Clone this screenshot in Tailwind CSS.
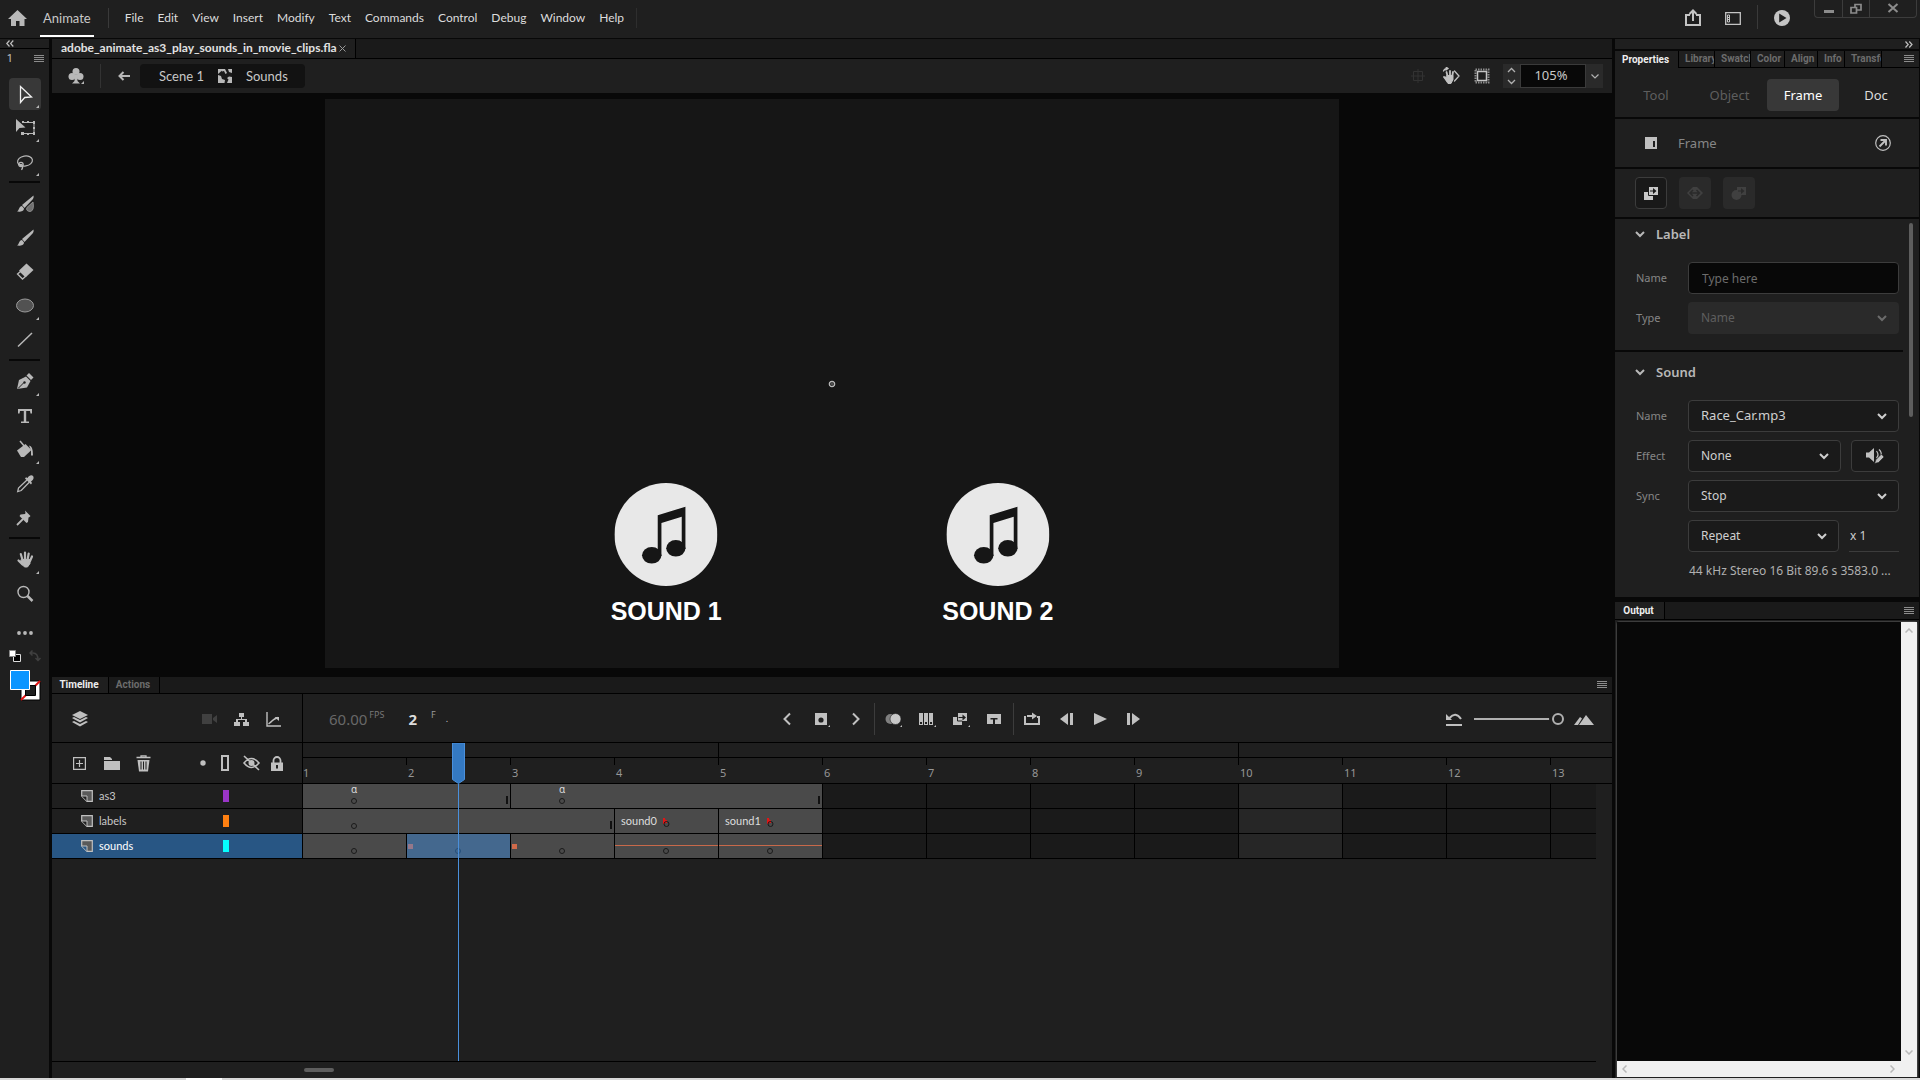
<!DOCTYPE html>
<html lang="en">
<head>
<meta charset="utf-8">
<title>Animate</title>
<script src="https://cdn.jsdelivr.net/npm/@tailwindcss/browser@4"></script>
</head>
<body class="flex h-screen flex-col overflow-hidden bg-[#080808] font-['Noto_Sans',sans-serif] text-[13px] text-[#c8c8c8]">

<!-- Menu bar -->
<header class="flex h-[38px] shrink-0 justify-between bg-[#1f1f1f]">
  <div class="flex items-start font-[Lato,sans-serif]">
    <button aria-label="Home" class="mt-[10px] ml-2"><svg class="h-[17px] w-5" viewBox="0 0 20 17" fill="#b8b8b8"><path d="M9.500 0 0 9h3v7h5v-5h3.500v5h5V9H19z"/></svg></button>
    <a href="#" class="mt-2 ml-3 border-b-2 border-white px-[3px] pb-[7px] text-[13px] leading-5 text-[#c8c8c8]">Animate</a>
    <div class="mt-2 ml-[14px] h-5 w-px bg-[#3a3a3a]"></div>
    <nav class="mt-2 ml-4 flex gap-[14px] text-xs leading-5 text-[#dcdcdc]">
      <a href="#">File</a><a href="#">Edit</a><a href="#">View</a><a href="#">Insert</a><a href="#">Modify</a><a href="#">Text</a><a href="#">Commands</a><a href="#">Control</a><a href="#">Debug</a><a href="#">Window</a><a href="#">Help</a>
    </nav>
    <div class="mt-2 ml-3 h-5 w-px bg-[#2e2e2e]"></div>
  </div>
  <div class="flex items-start">
    <button aria-label="Share" class="mt-[9px]"><svg class="h-[18px] w-4" viewBox="0 0 16 18" fill="none" stroke="#c4c4c4" stroke-width="2"><path d="M5 6H1v10h14V6h-4M8 12V2M4.500 5 8 1.500 11.500 5"/></svg></button>
    <button aria-label="Workspace" class="mt-3 ml-6"><svg class="h-[13px] w-4" viewBox="0 0 16 13" fill="none" stroke="#c4c4c4" stroke-width="1.300"><path d="M.7.7h14.600v11.600H.7z"/><path d="M2.500 3h2v7h-2z" stroke-width="1"/><path d="M2 5.500h3M2 7.500h3" stroke-width="1"/></svg></button>
    <div class="mt-[5px] ml-4 h-6 w-px bg-[#3a3a3a]"></div>
    <button aria-label="Test movie" class="mt-[10px] ml-4"><svg class="size-4" viewBox="0 0 16 16"><circle cx="8" cy="8" r="8" fill="#c4c4c4"/><path d="M5.200 3.500 12.500 8l-7.300 4.500z" fill="#1f1f1f"/></svg></button>
    <div class="mr-[3px] ml-6 flex h-[18px] divide-x divide-[#3c3c3c] rounded-b-sm border border-t-0 border-[#3c3c3c]">
      <button aria-label="Minimize" class="flex w-7 justify-center"><svg class="h-4 w-3" viewBox="0 0 12 16"><path d="M1 10h10v3H1z" fill="#8c8c8c"/></svg></button>
      <button aria-label="Restore" class="flex w-[27px] justify-center"><svg class="h-4 w-3" viewBox="0 0 12 16" fill="none" stroke="#8c8c8c" stroke-width="1.700"><path d="M1 7.500h5.500v5.500H1zM5 7V4.500h6V10H7"/></svg></button>
      <button aria-label="Close" class="flex w-[46px] justify-center"><svg class="h-4 w-3" viewBox="0 0 12 16" stroke="#8c8c8c" stroke-width="2"><path d="m1.500 4 9 8m0-8-9 8"/></svg></button>
    </div>
  </div>
</header>

<div class="mt-px flex min-h-0 flex-1 gap-[3px]">

  <!-- Tools -->
  <aside class="flex w-[49px] shrink-0 flex-col items-center bg-[#1f1f1f]">
    <div class="flex h-[10px] w-full items-center border-b border-black pl-[6px]"><svg class="h-[7px] w-2" viewBox="0 0 8 7" fill="none" stroke="#c0c0c0" stroke-width="1.200"><path d="M3.500.5.8 3.500l2.700 3M7.300.5 4.600 3.500l2.700 3"/></svg></div>
    <div class="flex h-[19px] w-full items-center justify-between pr-[5px] pl-[7px]"><span class="font-[Roboto,sans-serif] text-[10px] leading-3">1</span><button aria-label="Tools menu"><svg class="h-2 w-[10px]" viewBox="0 0 10 8" fill="#8c8c8c"><path d="M0 0h10v1H0zM0 2h10v1H0zM0 4h10v1H0zM0 6h10v1H0z"/></svg></button></div>
    <div class="mt-[10px] flex flex-col gap-[2px]">
      <button aria-label="Selection" class="rounded-sm bg-[#383838]"><svg class="size-8" viewBox="0 0 32 32"><path d="M11.500 8.500v16l4.200-5 6.800-.5z" fill="none" stroke="#f0f0f0" stroke-width="1.300"/><path d="M30 27v3h-3z" fill="#b8b8b8"/></svg></button>
      <button aria-label="Free transform"><svg class="size-8" viewBox="0 0 32 32"><path d="M14 10.500h11v11H13" fill="none" stroke="#b8b8b8"/><path d="M12 20h3v3h-3zM24 9h2v3h-2zM24 20h2v3h-2zM18 9h2v2h-2zM18 21h2v2h-2zM24 15h2v2h-2zM13 9h2v2h-2z" fill="#b8b8b8"/><path d="M7 7v13l3.500-4 6-.5z" fill="#b8b8b8"/><path d="M30 27v3h-3z" fill="#b8b8b8"/></svg></button>
      <button aria-label="Lasso"><svg class="size-8" viewBox="0 0 32 32" fill="none" stroke="#b8b8b8" stroke-width="1.200"><ellipse cx="16" cy="15" rx="7.500" ry="5" transform="rotate(-10 16 15)"/><circle cx="12" cy="18.500" r="2.200"/><path d="M9 18.500h4q1.500 3-.5 5.500"/><path d="M30 27v3h-3z" fill="#b8b8b8" stroke="none"/></svg></button>
    </div>
    <div class="mt-[3px] mb-[5px] h-[2px] w-[31px] bg-[#080808]"></div>
    <div class="flex flex-col gap-[2px]">
      <button aria-label="Fluid brush"><svg class="size-8" viewBox="0 0 32 32" fill="#b8b8b8"><path d="M24.500 7.500 13 17l2.500 3L24 11q1-2 .5-3.500zM8 23.500c2-.5 2-5.500 5-5.500l2 2.500c0 3-4 3.500-7 3z"/><path d="M24 14q1.500 9-3 9.500-4.500-.5-3-4z" fill="#707070" stroke="#8c8c8c"/></svg></button>
      <button aria-label="Classic brush"><svg class="size-8" viewBox="0 0 32 32" fill="#b8b8b8"><path d="M24.500 7.500 13 17l2.500 3L24 11q1-2 .5-3.500zM8 23.500c2-.5 2-5.500 5-5.500l2 2.500c0 3-4 3.500-7 3z"/></svg></button>
      <button aria-label="Eraser"><svg class="size-8" viewBox="0 0 32 32"><path d="m17.500 7.500 7 6.500-7.500 7-7-6.500z" fill="#b8b8b8"/><path d="m11.500 15.500 5 5-3 2.500-5-5z" fill="none" stroke="#b8b8b8" stroke-width="1.300"/></svg></button>
      <button aria-label="Oval"><svg class="size-8" viewBox="0 0 32 32"><ellipse cx="16" cy="15.500" rx="8.500" ry="6.500" fill="#525252" stroke="#9a9a9a"/><path d="M30 27v3h-3z" fill="#b8b8b8"/></svg></button>
      <button aria-label="Line"><svg class="size-8" viewBox="0 0 32 32"><path d="M9 22.500 23 9" stroke="#b8b8b8" stroke-width="1.500"/></svg></button>
    </div>
    <div class="mt-[3px] mb-[5px] h-[2px] w-[31px] bg-[#080808]"></div>
    <div class="flex flex-col gap-[2px]">
      <button aria-label="Pen"><svg class="size-8" viewBox="0 0 32 32" fill="#b8b8b8"><path d="m8 23 2-9 7-3.500 4.500 4.500L18 21.500z"/><path d="m17.500 9.500 2.500-2.500 4.500 4.500-2.500 2.500z"/><path d="m9 22.500 6-6" stroke="#1f1f1f"/><circle cx="15.500" cy="16.500" r="1.200" fill="#1f1f1f"/><path d="M30 27v3h-3z"/></svg></button>
      <button aria-label="Text"><svg class="size-8" viewBox="0 0 32 32" fill="#b8b8b8"><path d="M9 9h14v4.500h-1.500L21 11h-3.800v10.500H20V23h-8v-1.500h2.800V11H11l-.5 2.500H9z"/></svg></button>
      <button aria-label="Paint bucket"><svg class="size-8" viewBox="0 0 32 32" fill="#b8b8b8"><path d="m8 16.500 8.500-6.500 6 6-7.500 7h-3z"/><path d="m11 7 5 6" stroke="#b8b8b8" stroke-width="1.500"/><path d="M20 11.500q4 0 4 10h-2v-5z"/><path d="M30 27v3h-3z"/></svg></button>
      <button aria-label="Eyedropper"><svg class="size-8" viewBox="0 0 32 32"><path d="m18 12-8.500 8-.8 3.500 3.500-1L20.500 14" fill="none" stroke="#b8b8b8" stroke-width="1.300"/><path d="m16 10.500 6 6 1-1.500-1-1.500c3-2 3-4 2-5.500s-4-1-5.500 2l-1.500-.8z" fill="#b8b8b8"/></svg></button>
      <button aria-label="Asset warp"><svg class="size-8" viewBox="0 0 32 32" fill="#b8b8b8"><path d="M16 8.500 21.500 14l-1 1-1 .5-.5 4.500-1.500 1-7-7 1-1.500 4.500-.5.500-1z"/><path d="m8 23 6-6" stroke="#b8b8b8" stroke-width="1.800"/></svg></button>
    </div>
    <div class="mt-[3px] mb-[5px] h-[2px] w-[31px] bg-[#080808]"></div>
    <div class="flex flex-col gap-[2px]">
      <button aria-label="Hand"><svg class="size-8" viewBox="0 0 32 32" fill="none" stroke="#b8b8b8" stroke-width="2.200" stroke-linecap="round"><path d="M13.500 16 11.800 10M16 15V8.500M18.700 15l1-5.500M21 17l2-4.500M9.500 16.500l4 4"/><path d="M12.500 15.500h8.500v4l-2.500 3.500h-3l-4-4.500z" fill="#b8b8b8" stroke-width="1"/><path d="M30 27v3h-3z" fill="#b8b8b8" stroke="none"/></svg></button>
      <button aria-label="Zoom"><svg class="size-8" viewBox="0 0 32 32" fill="none" stroke="#b8b8b8"><circle cx="14.500" cy="14" r="5.500" stroke-width="1.400"/><path d="m18.500 18 5 5" stroke-width="2.500"/></svg></button>
    </div>
    <button aria-label="Edit toolbar" class="mt-[13px]"><svg class="h-5 w-8" viewBox="0 0 32 20" fill="#b8b8b8"><circle cx="10" cy="10" r="1.900"/><circle cx="16" cy="10" r="1.900"/><circle cx="22" cy="10" r="1.900"/></svg></button>
    <div class="mt-[5px] flex w-8 items-center justify-between">
      <button aria-label="Default colours"><svg class="h-4 w-3" viewBox="0 0 12 16"><path d="M4.500 6.500h7v7h-7z" fill="#000" stroke="#ddd"/><path d="M.5 2.500h6v6h-6z" fill="#fff" stroke="#888"/></svg></button>
      <button aria-label="Swap colours"><svg class="h-4 w-3" viewBox="0 0 12 16" fill="none" stroke="#404040" stroke-width="1.500"><path d="M1 5h3q5 0 5 7M3.500 2.500 1 5l2.500 2.500M6.500 10 9 12.500l2.500-2.500"/></svg></button>
    </div>
    <button aria-label="Fill and stroke colour" class="mt-[5px]"><svg class="size-8" viewBox="0 0 32 32"><path d="M12 12h19v19H12z" fill="#fff" stroke="#000"/><path d="m12 31 19-19" stroke="#e01010" stroke-width="2"/><path d="M16.500 16.500h10v10h-10z" fill="#1f1f1f" stroke="#000"/><path d="M1.500 1.500h19v19h-19z" fill="#0a95ff" stroke="#fff"/></svg></button>
  </aside>

  <!-- Document and timeline -->
  <main class="flex min-w-0 flex-1 flex-col gap-[7px]">
    <section class="flex min-h-0 flex-[631_1_0%] flex-col">
      <div class="flex h-5 shrink-0 border-b border-black bg-[#1a1a1a]">
        <div class="flex w-[304px] items-center justify-between border-r border-black bg-[#1f1f1f] px-[9px] pb-px font-[Lato,sans-serif] text-xs leading-4 font-bold whitespace-nowrap text-[#e2e2e2]">adobe_animate_as3_play_sounds_in_movie_clips.fla<button aria-label="Close document"><svg class="size-[7px]" viewBox="0 0 7 7" stroke="#9a9a9a"><path d="m.5.5 6 6m0-6-6 6"/></svg></button></div>
      </div>
      <div class="flex h-[34px] shrink-0 items-center justify-between bg-[#1f1f1f] pr-[9px] pl-4">
        <div class="flex items-center">
          <button aria-label="Edit symbols"><svg class="size-[18px]" viewBox="0 0 18 18" fill="#b8b8b8"><circle cx="8" cy="4.500" r="3.500"/><circle cx="4" cy="9.500" r="3.500"/><circle cx="12" cy="9.500" r="3.500"/><path d="M7 8h2l.5 6 2.500 2.500H4L6.500 14z"/><path d="M16 14v3h-3z"/></svg></button>
          <div class="mr-[17px] ml-3.5 h-6 w-px bg-[#333]"></div>
          <button aria-label="Back"><svg class="h-[10px] w-3" viewBox="0 0 12 10"><path d="M12 5H2M5.500 1 1.500 5l4 4" fill="none" stroke="#b8b8b8" stroke-width="2"/></svg></button>
          <div class="ml-[10px] flex h-6 items-center rounded-sm bg-[#121212] pr-[17px] pl-[19px] font-[Lato,sans-serif] leading-5">
            <a href="#">Scene 1</a>
            <svg class="mr-[14px] ml-[14px] size-[14px]" viewBox="0 0 14 14"><path d="M0 0h14v14H0z" fill="#b8b8b8"/><path d="M0 0h2.500l1.500 2.500L6 2l1.500 3L9 4 7 0h3l1 3 3 1V8l-3-.5L9 9l1.500 1.500L9 14H6.500L7 11 4 10 3 7 0 6z" fill="#1a1a1a"/><path d="M0 8h2l1 3 2.500.5V14H0zM0 0h4v1.500L0 5z" fill="#b8b8b8"/></svg>
            <a href="#">Sounds</a>
          </div>
        </div>
        <div class="flex items-center">
          <button aria-label="Centre stage"><svg class="size-4" viewBox="0 0 16 16" fill="none" stroke="#333"><path d="M3.500 3.500h9v9h-9zM8 1v14M1 8h14"/></svg></button>
          <button aria-label="Rotate stage" class="ml-4"><svg class="h-[18px] w-[18px]" viewBox="0 0 18 18" fill="none" stroke="#c0c0c0" stroke-linecap="round"><path d="M5.500 9 4.500 5M8 8V4M10.300 9l.7-4M2 10l3 3" stroke-width="1.800"/><path d="M5 8.500h6v4L9 16.500H6L3 12z" fill="#c0c0c0"/><path d="m12.500 4 4.500 5-4.500 5M1.500 4q1-2.500 4-2.500M4 0l2 1.500L4 3" stroke-width="1.300"/></svg></button>
          <button aria-label="Clip content" class="ml-[14px]"><svg class="size-4" viewBox="0 0 16 16" fill="none" stroke="#8c8c8c"><path d="M1.500 1.500h13v13h-13z" stroke-width="2" stroke-dasharray="1.500 1"/><path d="M3.500 3.500h9v9h-9z" stroke="#c4c4c4" stroke-width="1.500"/></svg></button>
          <div class="ml-[13px] flex h-6 items-stretch bg-[#2a2a2a]">
            <button aria-label="Step zoom" class="flex w-[17px] items-center justify-center"><svg class="h-[18px] w-[9px]" viewBox="0 0 9 18" fill="none" stroke="#b0b0b0" stroke-width="1.300"><path d="m1 5 3.500-3.500L8 5M1 13l3.500 3.500L8 13"/></svg></button>
            <input aria-label="Zoom" value="105%" class="w-[66px] border border-[#3a3a3a] bg-[#080808] pr-1 text-center text-[#c8c8c8]">
            <button aria-label="Zoom presets" class="flex w-[17px] items-center justify-center"><svg class="h-[5px] w-2" viewBox="0 0 8 5" fill="none" stroke="#b0b0b0" stroke-width="1.200"><path d="m.5.5 3.500 3.500L7.500.5"/></svg></button>
          </div>
        </div>
      </div>
      <div class="min-h-0 flex-1 bg-[#080808] pt-[6px] pb-[2px]">
        <div class="relative mx-auto h-full w-[65%] bg-[#161616] font-['Liberation_Sans',sans-serif]">
          <svg class="absolute top-1/2 left-1/2 size-2 -translate-1/2" viewBox="0 0 8 8" fill="none"><circle cx="4" cy="4" r="2.700" stroke="#ccc" stroke-width="1.200"/><path d="M4 1v6M1 4h6" stroke="#888" stroke-width=".6"/></svg>
          <div class="absolute top-[67.500%] left-[33.650%] flex -translate-x-1/2 flex-col items-center">
            <svg class="size-[103px]" viewBox="0 0 103 103"><circle cx="51.500" cy="51.500" r="51.500" fill="#e8e8e8"/><g fill="#161616"><path d="M43.300 32.300 71 23.700V66h-3.700V33.700L47 40v33h-3.700z"/><ellipse cx="37.300" cy="72.300" rx="9.700" ry="8.300"/><ellipse cx="61.400" cy="65.300" rx="9.600" ry="8.300"/></g></svg>
            <div class="mt-[11px] text-[25px] leading-7 font-bold whitespace-nowrap text-white">SOUND 1</div>
          </div>
          <div class="absolute top-[67.500%] left-[66.350%] flex -translate-x-1/2 flex-col items-center">
            <svg class="size-[103px]" viewBox="0 0 103 103"><circle cx="51.500" cy="51.500" r="51.500" fill="#e8e8e8"/><g fill="#161616"><path d="M43.300 32.300 71 23.700V66h-3.700V33.700L47 40v33h-3.700z"/><ellipse cx="37.300" cy="72.300" rx="9.700" ry="8.300"/><ellipse cx="61.400" cy="65.300" rx="9.600" ry="8.300"/></g></svg>
            <div class="mt-[11px] text-[25px] leading-7 font-bold whitespace-nowrap text-white">SOUND 2</div>
          </div>
        </div>
      </div>
    </section>

    <section class="flex min-h-0 flex-[401_1_0%] flex-col bg-[#1f1f1f]">
      <div class="flex h-[17px] shrink-0 items-stretch border-b border-black bg-[#1a1a1a] font-[Roboto,sans-serif] text-[10px] leading-4 font-bold">
        <button class="w-[57px] border-r border-black bg-[#1f1f1f] pr-[2px] text-[#eee]">Timeline</button>
        <button class="w-[51px] border-r border-black pr-[2px] text-[#6c6c6c]">Actions</button>
        <button aria-label="Timeline menu" class="mr-[5px] ml-auto"><svg class="h-2 w-[10px]" viewBox="0 0 10 8" fill="#8c8c8c"><path d="M0 0h10v1H0zM0 2h10v1H0zM0 4h10v1H0zM0 6h10v1H0z"/></svg></button>
      </div>

      <div class="flex h-[49px] shrink-0 border-b border-black">
        <div class="flex w-[251px] shrink-0 items-center border-r border-black pt-[2px] pl-5">
          <button aria-label="Layer depth"><svg class="size-4" viewBox="0 0 16 16" fill="#c0c0c0"><path d="m8 0 8 4-8 4-8-4zM0 7l2-1 6 3 6-3 2 1-8 4.500zM0 11l2-1 6 3 6-3 2 1-8 4.500z"/></svg></button>
          <button aria-label="Camera" class="ml-[114px]"><svg class="h-[10px] w-4" viewBox="0 0 16 10" fill="#404040"><path d="M0 0h10v10H0zM11 4l4-3v8l-4-3z"/></svg></button>
          <button aria-label="Parenting view" class="ml-4"><svg class="size-[15px]" viewBox="0 0 15 15" fill="#c0c0c0"><path d="M5 1h5v4H8v2h5v3h2v4H9v-4h2V8H4v2h2v4H0v-4h2V7h5V5H5z"/></svg></button>
          <button aria-label="Graph" class="ml-[17px]"><svg class="size-[15px]" viewBox="0 0 15 15" fill="none" stroke="#c0c0c0" stroke-width="1.400"><path d="M1 0v14h14M2.500 12Q5 10 6.500 8.500T12 5.500"/><path d="M8.500 5h4.500v4z" fill="#c0c0c0" stroke="none"/></svg></button>
        </div>
        <div class="flex min-w-0 flex-1 items-center pt-[2px] pr-[18px] pl-[26px]">
          <div class="flex flex-1 items-center">
            <span class="text-[15px] leading-5 text-[#686868]">60.00</span><span class="mb-2 ml-[2px] text-[9px] leading-3 text-[#777]">FPS</span>
            <span class="ml-6 text-[15px] leading-5 font-bold text-[#dcdcdc]">2</span><span class="mb-2 ml-[14px] text-[9px] leading-3 text-[#999]">F</span><span class="ml-[10px] text-[9px] leading-3">.</span>
          </div>
          <div class="flex shrink-0 items-center">
            <button aria-label="Previous keyframe"><svg class="h-[14px] w-2" viewBox="0 0 8 14" fill="none" stroke="#c0c0c0" stroke-width="2"><path d="M7 1.500 1.500 7 7 12.500"/></svg></button>
            <button aria-label="Insert keyframe" class="ml-6"><svg class="size-4" viewBox="0 0 16 16"><path d="M0 2h12v12H0z" fill="#c0c0c0"/><circle cx="6" cy="9" r="2.600" fill="#1f1f1f"/><path d="M15 14v2h-2z" fill="#c0c0c0"/></svg></button>
            <button aria-label="Next keyframe" class="ml-[21px]"><svg class="h-[14px] w-2" viewBox="0 0 8 14" fill="none" stroke="#c0c0c0" stroke-width="2"><path d="M1 1.500 6.500 7 1 12.500"/></svg></button>
            <div class="ml-[14px] h-8 w-px bg-[#3c3c3c]"></div>
            <button aria-label="Onion skin" class="ml-[10px]"><svg class="h-4 w-[18px]" viewBox="0 0 18 16"><circle cx="5.500" cy="8" r="5" fill="#808080"/><circle cx="10.500" cy="8" r="5.500" fill="#c8c8c8" stroke="#1f1f1f" stroke-width=".6"/><path d="M17 14v2h-2z" fill="#c0c0c0"/></svg></button>
            <button aria-label="Edit multiple frames" class="ml-4"><svg class="size-[18px]" viewBox="0 0 18 18" fill="#c0c0c0"><path d="M0 3h4v12H0zM5 3h4v12H5zM10 3h4v12h-4z"/><path d="M1 12h2v2H1zM6 12h2v2H6zM11 12h2v2h-2z" fill="#1f1f1f"/><path d="M17 15v2h-2z"/></svg></button>
            <button aria-label="Create tween" class="ml-4"><svg class="size-[18px]" viewBox="0 0 18 18" fill="#c0c0c0"><path d="M0 7h9v8H0zM5 3h9v8H5z"/><path d="M4.500 7V11H9" fill="none" stroke="#1f1f1f"/><path d="M5.500 7h4V4.500l3.500 3-3.500 3V8h-4z" fill="#1f1f1f"/><path d="M17 15v2h-2z"/></svg></button>
            <button aria-label="Remove frame" class="ml-4"><svg class="h-4 w-[14px]" viewBox="0 0 14 16"><path d="M0 3h14v10H0z" fill="#c0c0c0"/><path d="M3.500 7h7v1.500H8V13H6V8.500H3.500z" fill="#1f1f1f"/></svg></button>
            <div class="ml-3 h-8 w-px bg-[#3c3c3c]"></div>
            <button aria-label="Loop" class="ml-[10px]"><svg class="size-4" viewBox="0 0 16 16"><path d="M2 6H1v7h14V6h-2M3 5h6" fill="none" stroke="#c0c0c0" stroke-width="2"/><path d="M8 1.500 13 5 8 8.500z" fill="#c0c0c0"/></svg></button>
            <button aria-label="Step back" class="ml-5"><svg class="h-[14px] w-[13px]" viewBox="0 0 13 14" fill="#c0c0c0"><path d="M8 1v12L0 7zM10 1h3v12h-3z"/></svg></button>
            <button aria-label="Play" class="ml-[21px]"><svg class="h-[14px] w-[13px]" viewBox="0 0 13 14" fill="#c0c0c0"><path d="m0 1 13 6-13 6z"/></svg></button>
            <button aria-label="Step forward" class="ml-5"><svg class="h-[14px] w-[13px]" viewBox="0 0 13 14" fill="#c0c0c0"><path d="M5 1v12l8-6zM0 1h3v12H0z"/></svg></button>
          </div>
          <div class="flex flex-1 items-center justify-end">
            <button aria-label="Reset zoom"><svg class="h-4 w-[17px]" viewBox="0 0 17 16" fill="none" stroke="#c0c0c0" stroke-width="2"><path d="M0 14h16M3.500 7q6-7 11.500 1"/><path d="M0 3v6h6z" fill="#c0c0c0" stroke="none"/></svg></button>
            <input type="range" value="100" aria-label="Frame width" class="ml-[11px] h-4 w-[90px] appearance-none bg-transparent [&::-webkit-slider-runnable-track]:h-[2px] [&::-webkit-slider-runnable-track]:bg-[#b0b0b0] [&::-webkit-slider-thumb]:-mt-[5px] [&::-webkit-slider-thumb]:size-3 [&::-webkit-slider-thumb]:appearance-none [&::-webkit-slider-thumb]:rounded-full [&::-webkit-slider-thumb]:border-2 [&::-webkit-slider-thumb]:border-[#b0b0b0] [&::-webkit-slider-thumb]:bg-[#1f1f1f] [&::-webkit-slider-thumb]:shadow-[0_0_0_3px_#1f1f1f]">
            <button aria-label="Wide frames" class="ml-[10px]"><svg class="h-3 w-5" viewBox="0 0 20 12" fill="#c0c0c0"><path d="m5 12 7-10 8 10zM0 12l6-8 2 1.500L4 12z"/></svg></button>
          </div>
        </div>
      </div>

      <div class="flex min-h-0 flex-1">
        <div class="w-[250px] shrink-0">
          <div class="flex h-[41px] items-center border-b border-black pl-[21px]">
            <button aria-label="New layer"><svg class="size-[13px]" viewBox="0 0 13 13" fill="none" stroke="#c0c0c0" stroke-width="1.200"><path d="M.6.6h11.800v11.800H.6zM6.500 3v7M3 6.500h7"/></svg></button>
            <button aria-label="New folder" class="ml-[18px]"><svg class="h-[13px] w-4" viewBox="0 0 16 13" fill="#c0c0c0"><path d="M0 3V0h6l2 2v1zM0 4h16v9H0z"/></svg></button>
            <button aria-label="Delete layer" class="ml-4"><svg class="h-[17px] w-[15px]" viewBox="0 0 15 17"><path d="M.5 2.500h14M5 2V.8h5V2" fill="none" stroke="#c0c0c0" stroke-width="1.300"/><path d="M1.500 5h12L12 16.500H3z" fill="#c0c0c0"/><path d="M5 6.500v8M7.500 6.500v8M10 6.500v8" stroke="#1f1f1f"/></svg></button>
            <button aria-label="Highlight layers" class="ml-[49px]"><svg class="size-[6px]" viewBox="0 0 6 6"><circle cx="3" cy="3" r="2.700" fill="#c0c0c0"/></svg></button>
            <button aria-label="Outlines" class="ml-[15px]"><svg class="h-4 w-2" viewBox="0 0 8 16"><path d="M1 1h6v14H1z" fill="none" stroke="#c0c0c0" stroke-width="2"/></svg></button>
            <button aria-label="Hide layers" class="ml-[14px]"><svg class="h-4 w-[17px]" viewBox="0 0 17 16" fill="none" stroke="#c0c0c0" stroke-width="1.600"><path d="M1 8q7.500-9 15 0-7.500 9-15 0zM1 1l15 14"/><circle cx="8.500" cy="8" r="2.200" fill="#c0c0c0"/></svg></button>
            <button aria-label="Lock layers" class="ml-[11px]"><svg class="h-[15px] w-3" viewBox="0 0 12 15"><path d="M2.500 7V4.500a3.500 3.500 0 0 1 7 0V7" fill="none" stroke="#c0c0c0" stroke-width="1.800"/><path d="M0 6.500h12V15H0z" fill="#c0c0c0"/><path d="M5 9h2v3.500H5z" fill="#1f1f1f"/></svg></button>
          </div>
          <div class="flex h-[25px] items-center border-b border-black pl-[29px] font-[Lato,sans-serif] text-[11px] leading-4">
            <svg class="size-3" viewBox="0 0 12 12"><path d="M.7.7h10.600v10.600H6L.7 6z" fill="#5a5a5a" stroke="#c0c0c0" stroke-width="1.200"/><path d="M.7 6H6v5.300" fill="#1f1f1f" stroke="#c0c0c0"/></svg>
            <span class="ml-[6px] w-[124px]">as3</span><span class="h-3 w-[6px] bg-[#9a35c8]"></span>
          </div>
          <div class="flex h-[25px] items-center border-b border-black pl-[29px] font-[Lato,sans-serif] text-[11px] leading-4">
            <svg class="size-3" viewBox="0 0 12 12"><path d="M.7.7h10.600v10.600H6L.7 6z" fill="#5a5a5a" stroke="#c0c0c0" stroke-width="1.200"/><path d="M.7 6H6v5.300" fill="#1f1f1f" stroke="#c0c0c0"/></svg>
            <span class="ml-[6px] w-[124px]">labels</span><span class="h-3 w-[6px] bg-[#ff8011]"></span>
          </div>
          <div class="flex h-[25px] items-center border-b border-black bg-[#285684] pl-[29px] font-[Lato,sans-serif] text-[11px] leading-4 text-white">
            <svg class="size-3" viewBox="0 0 12 12"><path d="M.7.7h10.600v10.600H6L.7 6z" fill="#5a5a5a" stroke="#c0c0c0" stroke-width="1.200"/><path d="M.7 6H6v5.300" fill="#285684" stroke="#c0c0c0"/></svg>
            <span class="ml-[6px] w-[124px]">sounds</span><span class="h-3 w-[6px] bg-[#05ffff]"></span>
          </div>
        </div>

        <!-- Frames -->
        <div class="relative min-w-0 flex-1">
          <div class="h-[116px] border-l border-black">
            <div class="h-[41px] overflow-hidden border-b border-black">
              <div class="flex h-[15px] border-b border-black">
                <div class="w-[416px] shrink-0 border-r border-black"></div><div class="w-[520px] shrink-0 border-r border-black"></div>
              </div>
              <ol class="flex h-[25px] text-[11px] leading-4 text-[#969696]">
                <li class="w-[104px] shrink-0 pt-[7px]">1</li>
                <li class="w-[104px] shrink-0"><div class="-ml-px h-[7px] border-l border-black"></div><span class="pl-px">2</span></li>
                <li class="w-[104px] shrink-0"><div class="-ml-px h-[7px] border-l border-black"></div><span class="pl-px">3</span></li>
                <li class="w-[104px] shrink-0"><div class="-ml-px h-[7px] border-l border-black"></div><span class="pl-px">4</span></li>
                <li class="w-[104px] shrink-0"><div class="-ml-px h-[7px] border-l border-black"></div><span class="pl-px">5</span></li>
                <li class="w-[104px] shrink-0"><div class="-ml-px h-[7px] border-l border-black"></div><span class="pl-px">6</span></li>
                <li class="w-[104px] shrink-0"><div class="-ml-px h-[7px] border-l border-black"></div><span class="pl-px">7</span></li>
                <li class="w-[104px] shrink-0"><div class="-ml-px h-[7px] border-l border-black"></div><span class="pl-px">8</span></li>
                <li class="w-[104px] shrink-0"><div class="-ml-px h-[7px] border-l border-black"></div><span class="pl-px">9</span></li>
                <li class="w-[104px] shrink-0"><div class="-ml-px h-[7px] border-l border-black"></div><span class="pl-px">10</span></li>
                <li class="w-[104px] shrink-0"><div class="-ml-px h-[7px] border-l border-black"></div><span class="pl-px">11</span></li>
                <li class="w-[104px] shrink-0"><div class="-ml-px h-[7px] border-l border-black"></div><span class="pl-px">12</span></li>
                <li class="w-[104px] shrink-0"><div class="-ml-px h-[7px] border-l border-black"></div><span class="pl-px">13</span></li>
              </ol>
            </div>
            <div class="mr-4 overflow-hidden">
              <!-- as3 -->
              <div class="grid h-[25px] w-max grid-cols-[repeat(13,104px)] *:border-r *:border-b *:border-black">
                <div class="col-span-2 flex items-end justify-between bg-[#4a4a4a]"><span class="flex w-[102px] flex-col items-center"><span class="mb-1 text-[10px] leading-[10px] text-[#ddd]">ɑ</span><span class="mb-1 size-[6px] rounded-full border border-[#1a1a1a]"></span></span><span class="mr-[2px] mb-1 h-2 w-[2px] bg-[#111]"></span></div>
                <div class="col-span-3 flex items-end justify-between bg-[#4a4a4a]"><span class="flex w-[102px] flex-col items-center"><span class="mb-1 text-[10px] leading-[10px] text-[#ddd]">ɑ</span><span class="mb-1 size-[6px] rounded-full border border-[#1a1a1a]"></span></span><span class="mr-[2px] mb-1 h-2 w-[2px] bg-[#111]"></span></div>
                <div class="bg-[#1a1a1a]"></div><div class="bg-[#1a1a1a]"></div><div class="bg-[#1a1a1a]"></div><div class="bg-[#1a1a1a]"></div><div class="bg-[#262626]"></div><div class="bg-[#1a1a1a]"></div><div class="bg-[#1a1a1a]"></div><div class="bg-[#1a1a1a]"></div>
              </div>
              <!-- labels -->
              <div class="grid h-[25px] w-max grid-cols-[repeat(13,104px)] *:border-r *:border-b *:border-black">
                <div class="col-span-3 flex items-end justify-between bg-[#4a4a4a]"><span class="flex w-[102px] justify-center"><span class="mb-1 size-[6px] rounded-full border border-[#1a1a1a]"></span></span><span class="mr-[2px] mb-1 h-2 w-[2px] bg-[#111]"></span></div>
                <div class="flex bg-[#4a4a4a] pt-1 pl-[6px] font-[Lato,sans-serif] text-[11px] leading-4 text-[#ddd]">sound0<svg class="ml-[6px] h-[14px] w-2" viewBox="0 0 8 14"><path d="M0 5l4 2.500V10H2zM0 5h2v6H0z" fill="#e01515"/><circle cx="3.500" cy="11" r="2.500" fill="none" stroke="#1a1a1a"/></svg></div>
                <div class="flex bg-[#4a4a4a] pt-1 pl-[6px] font-[Lato,sans-serif] text-[11px] leading-4 text-[#ddd]">sound1<svg class="ml-[6px] h-[14px] w-2" viewBox="0 0 8 14"><path d="M0 5l4 2.500V10H2zM0 5h2v6H0z" fill="#e01515"/><circle cx="3.500" cy="11" r="2.500" fill="none" stroke="#1a1a1a"/></svg></div>
                <div class="bg-[#1a1a1a]"></div><div class="bg-[#1a1a1a]"></div><div class="bg-[#1a1a1a]"></div><div class="bg-[#1a1a1a]"></div><div class="bg-[#262626]"></div><div class="bg-[#1a1a1a]"></div><div class="bg-[#1a1a1a]"></div><div class="bg-[#1a1a1a]"></div>
              </div>
              <!-- sounds -->
              <div class="grid h-[25px] w-max grid-cols-[repeat(13,104px)] *:border-r *:border-b *:border-black">
                <div class="flex items-end justify-center bg-[#4a4a4a] pr-px"><span class="mb-1 size-[6px] rounded-full border border-[#1a1a1a]"></span></div>
                <div class="relative flex items-end justify-center bg-[#44688e] pr-px"><span class="mb-1 size-[6px] rounded-full border border-[#26507c]"></span><span class="absolute top-[10px] left-px size-[5px] bg-[#96788a]"></span></div>
                <div class="relative flex items-end justify-center bg-[#4a4a4a] pr-px"><span class="mb-1 size-[6px] rounded-full border border-[#1a1a1a]"></span><span class="absolute top-[10px] left-px size-[5px] bg-[#d06a4a]"></span></div>
                <div class="flex flex-col items-center justify-between bg-[#4a4a4a] pt-[11px]"><span class="h-px w-full bg-[#c8694a]"></span><span class="mr-px mb-1 size-[6px] rounded-full border border-[#1a1a1a]"></span></div>
                <div class="flex flex-col items-center justify-between bg-[#4a4a4a] pt-[11px]"><span class="h-px w-full bg-[#c8694a]"></span><span class="mr-px mb-1 size-[6px] rounded-full border border-[#1a1a1a]"></span></div>
                <div class="bg-[#1a1a1a]"></div><div class="bg-[#1a1a1a]"></div><div class="bg-[#1a1a1a]"></div><div class="bg-[#1a1a1a]"></div><div class="bg-[#262626]"></div><div class="bg-[#1a1a1a]"></div><div class="bg-[#1a1a1a]"></div><div class="bg-[#1a1a1a]"></div>
              </div>
            </div>
          </div>
          <!-- Playhead -->
          <div class="absolute inset-y-0 left-[150px] flex w-[13px] flex-col items-center">
            <svg class="h-[41px] w-[13px]" viewBox="0 0 13 41"><path d="M.5 0v36.500l6 4 6-4V0z" fill="#3479c2" stroke="#4a90dc"/></svg>
            <div class="w-px flex-1 bg-[#4a90dc]"></div>
          </div>
        </div>
      </div>
      <div class="mr-4 h-px shrink-0 bg-black"></div>
      <div class="h-4 shrink-0 pt-[6px] pl-[252px]"><div class="h-1 w-[30px] rounded-full bg-[#5e5e5e]"></div></div>
    </section>
  </main>

  <!-- Right dock -->
  <aside class="mr-px flex w-[304px] shrink-0 flex-col gap-[5px]">
    <section class="bg-[#1f1f1f] pb-[18px]">
      <div class="flex h-3 items-center justify-end border-b-2 border-[#080808] pr-[6px]"><svg class="h-[7px] w-2" viewBox="0 0 8 7" fill="none" stroke="#c0c0c0" stroke-width="1.200"><path d="m.5.5 2.700 3-2.700 3M4.300.5 7 3.500l-2.700 3"/></svg></div>
      <div class="flex h-[17px] items-stretch font-[Roboto,sans-serif] text-[10px] leading-4 font-bold text-[#6c6c6c] *:overflow-hidden *:border-black *:text-left *:whitespace-nowrap">
        <button class="w-16 border-r pl-[7px] text-[#eee]">Properties</button>
        <button class="w-9 border-r border-b pl-[6px]">Library</button>
        <button class="w-9 border-r border-b pl-[6px]">Swatches</button>
        <button class="w-[34px] border-r border-b pl-[6px]">Color</button>
        <button class="w-[33px] border-r border-b pl-[6px]">Align</button>
        <button class="w-[27px] border-r border-b pl-[6px]">Info</button>
        <button class="w-[37px] border-r border-b pl-[6px]">Transform</button>
        <div class="flex flex-1 items-center justify-end border-b pr-[5px]"><button aria-label="Panel menu"><svg class="h-2 w-[10px]" viewBox="0 0 10 8" fill="#8c8c8c"><path d="M0 0h10v1H0zM0 2h10v1H0zM0 4h10v1H0zM0 6h10v1H0z"/></svg></button></div>
      </div>
      <div class="flex h-[51px] items-center border-b-2 border-[#080808] pt-[9px] pr-[6px] pb-1 pl-[5px] leading-5">
        <button class="h-8 w-[72px] text-[#5e5e5e]">Tool</button>
        <button class="h-8 w-[75px] text-[#5e5e5e]">Object</button>
        <button class="h-8 w-[72px] rounded-sm bg-[#383838] text-white">Frame</button>
        <button class="h-8 w-[74px] text-[#dcdcdc]">Doc</button>
      </div>
      <div class="flex h-[50px] items-center border-b-2 border-[#080808] pr-7 pl-[30px] leading-5 text-[#868686]">
        <svg class="size-3" viewBox="0 0 12 12"><path d="M0 0h12v12H0z" fill="#c0c0c0"/><path d="M8 4h2v6H8z" fill="#1f1f1f"/></svg>
        <span class="ml-[21px]">Frame</span>
        <button aria-label="Open" class="ml-auto"><svg class="size-4" viewBox="0 0 16 16" fill="none" stroke="#c0c0c0"><circle cx="8" cy="8" r="7.300" stroke-width="1.200"/><path d="M4.500 11.500 10 6M5.500 5h5.500v5.500" stroke-width="1.900"/></svg></button>
      </div>
      <div class="flex h-[50px] items-center gap-3 border-b-2 border-[#080808] pl-5">
        <button aria-label="Create motion tween" class="rounded-sm border border-[#3c3c3c] bg-[#191919]"><svg class="size-[30px]" viewBox="0 0 30 30" fill="#c8c8c8"><path d="M8 14h9v8H8zM13 9h9v8h-9z"/><path d="M12.500 13.500v4H17" fill="none" stroke="#191919"/><path d="M14 12.500h3V10l3.500 3-3.500 3v-2.500h-3z" fill="#191919"/></svg></button>
        <button aria-label="Create shape tween" class="rounded-sm bg-[#2a2a2a]"><svg class="size-8" viewBox="0 0 32 32"><path d="m8 16 6-6h4l6 6-6 6h-4z" fill="#404040"/><path d="M11 16h9M14 13l-3 3 3 3M17.500 13l3 3-3 3" fill="none" stroke="#2a2a2a" stroke-width="1.500"/></svg></button>
        <button aria-label="Create classic tween" class="rounded-sm bg-[#2a2a2a]"><svg class="size-8" viewBox="0 0 32 32" fill="#404040"><circle cx="13.500" cy="18" r="5"/><path d="M14 10h9v8h-9z"/><path d="M15 13.500h3V11l3.500 3-3.500 3v-2.500h-3z" fill="#2a2a2a"/></svg></button>
      </div>
      <div class="flex justify-between pr-[6px]">
        <div class="w-72">
          <div class="flex flex-col gap-2 border-b-2 border-[#080808] pb-4 pl-5">
            <button class="mb-[5px] flex h-[30px] items-center leading-5 font-semibold text-[#b8b8b8]"><svg class="mr-[11px] h-[7px] w-[10px]" viewBox="0 0 10 7" fill="none" stroke="#b8b8b8" stroke-width="2"><path d="m1 1 4 4 4-4"/></svg>Label</button>
            <div class="flex items-center text-[11px] text-[#868686]"><label for="lname" class="w-[53px] pl-px">Name</label><input id="lname" placeholder="Type here" class="h-8 w-[211px] rounded border border-[#3c3c3c] bg-[#080808] px-[13px] text-xs placeholder:text-[#6c6c6c]"></div>
            <div class="flex items-center text-[11px] text-[#868686]"><label for="ltype" class="w-[53px] pl-px">Type</label>
              <div class="relative"><select id="ltype" disabled class="h-8 w-[211px] appearance-none rounded bg-[#2a2a2a] px-[13px] text-xs text-[#5e5e5e] opacity-100"><option>Name</option></select><svg class="pointer-events-none absolute top-[13px] right-3 h-[7px] w-[10px]" viewBox="0 0 10 7" fill="none" stroke="#6c6c6c" stroke-width="2"><path d="m1 1 4 4 4-4"/></svg></div></div>
          </div>
          <div class="flex flex-col gap-2 pl-5">
            <button class="flex h-10 items-center leading-5 font-semibold text-[#b8b8b8]"><svg class="mr-[11px] h-[7px] w-[10px]" viewBox="0 0 10 7" fill="none" stroke="#b8b8b8" stroke-width="2"><path d="m1 1 4 4 4-4"/></svg>Sound</button>
            <div class="flex items-center text-[11px] text-[#868686]"><label for="sname" class="w-[53px] pl-px">Name</label>
              <div class="relative"><select id="sname" class="h-8 w-[211px] appearance-none rounded border border-[#3c3c3c] bg-[#1a1a1a] px-3 text-[13px] text-[#cfcfcf]"><option>Race_Car.mp3</option></select><svg class="pointer-events-none absolute top-[13px] right-3 h-[7px] w-[10px]" viewBox="0 0 10 7" fill="none" stroke="#cfcfcf" stroke-width="2"><path d="m1 1 4 4 4-4"/></svg></div></div>
            <div class="flex items-center text-[11px] text-[#868686]"><label for="effect" class="w-[53px] pl-px">Effect</label>
              <div class="relative"><select id="effect" class="h-8 w-[153px] appearance-none rounded border border-[#3c3c3c] bg-[#1a1a1a] px-3 text-xs text-[#cfcfcf]"><option>None</option></select><svg class="pointer-events-none absolute top-[13px] right-3 h-[7px] w-[10px]" viewBox="0 0 10 7" fill="none" stroke="#cfcfcf" stroke-width="2"><path d="m1 1 4 4 4-4"/></svg></div>
              <button aria-label="Edit sound envelope" class="ml-[10px] flex h-8 w-12 items-center justify-center rounded border border-[#3c3c3c] bg-[#1a1a1a]"><svg class="h-4 w-[18px]" viewBox="0 0 18 16" fill="#c0c0c0"><path d="M0 4.500h3L8 0v14l-5-4.500H0z"/><path d="M10.500 3q3 4 0 7M13 1.500q3 3 2 5.500" fill="none" stroke="#c0c0c0" stroke-width="1.200"/><path d="m10 11.500 5.500-5.500 2.500 3-5.500 5.500-4 1z" stroke="#1a1a1a" stroke-width=".6"/></svg></button></div>
            <div class="flex items-center text-[11px] text-[#868686]"><label for="sync" class="w-[53px] pl-px">Sync</label>
              <div class="relative"><select id="sync" class="h-8 w-[211px] appearance-none rounded border border-[#3c3c3c] bg-[#1a1a1a] px-3 text-xs text-[#cfcfcf]"><option>Stop</option></select><svg class="pointer-events-none absolute top-[13px] right-3 h-[7px] w-[10px]" viewBox="0 0 10 7" fill="none" stroke="#cfcfcf" stroke-width="2"><path d="m1 1 4 4 4-4"/></svg></div></div>
            <div class="flex items-center pl-[53px]">
              <div class="relative"><select aria-label="Repeat mode" class="h-8 w-[151px] appearance-none rounded border border-[#3c3c3c] bg-[#1a1a1a] px-3 text-xs text-[#cfcfcf]"><option>Repeat</option></select><svg class="pointer-events-none absolute top-[13px] right-3 h-[7px] w-[10px]" viewBox="0 0 10 7" fill="none" stroke="#cfcfcf" stroke-width="2"><path d="m1 1 4 4 4-4"/></svg></div>
              <input aria-label="Repeat count" value="x 1" class="ml-[10px] h-8 w-[50px] border-b border-[#3c3c3c] bg-transparent pl-px text-xs text-[#cfcfcf]">
            </div>
            <p class="pt-[3px] pl-[54px] text-xs leading-4 whitespace-nowrap text-[#b0b0b0]">44 kHz Stereo 16 Bit 89.6 s 3583.0 ...</p>
          </div>
        </div>
        <div class="mt-1 h-[194px] w-1 rounded-full bg-[#5e5e5e]"></div>
      </div>
    </section>

    <section class="flex min-h-0 flex-1 flex-col bg-[#1f1f1f]">
      <div class="flex h-[18px] shrink-0 items-stretch border-b border-black bg-[#1a1a1a] font-[Roboto,sans-serif] text-[10px] leading-4 font-bold">
        <button class="w-[50px] border-r border-black bg-[#1f1f1f] pr-[2px] text-[#eee]">Output</button>
        <button aria-label="Output menu" class="mr-[5px] ml-auto"><svg class="h-2 w-[10px]" viewBox="0 0 10 8" fill="#8c8c8c"><path d="M0 0h10v1H0zM0 2h10v1H0zM0 4h10v1H0zM0 6h10v1H0z"/></svg></button>
      </div>
      <div class="mx-px mt-px mb-px flex min-h-0 flex-1 flex-col rounded-t-sm border border-b-0 border-[#3c3c3c] bg-[#080808]">
        <div class="flex min-h-0 flex-1">
          <textarea aria-label="Output" readonly class="min-w-0 flex-1 resize-none bg-[#080808]"></textarea>
          <div class="flex w-4 flex-col items-center justify-between bg-[#f0f0f0] py-[6px]">
            <svg class="h-[5px] w-2" viewBox="0 0 8 5" fill="none" stroke="#b8b8b8" stroke-width="1.500"><path d="m.5 4.500 3.500-3.500 3.500 3.500"/></svg>
            <svg class="h-[5px] w-2" viewBox="0 0 8 5" fill="none" stroke="#b8b8b8" stroke-width="1.500"><path d="m.5.5 3.500 3.500L7.500.5"/></svg>
          </div>
        </div>
        <div class="flex h-4 shrink-0 items-center justify-between bg-[#f0f0f0] pr-[22px] pl-[5px]">
          <svg class="h-2 w-[5px]" viewBox="0 0 5 8" fill="none" stroke="#b8b8b8" stroke-width="1.500"><path d="M4.500.5 1 4l3.500 3.500"/></svg>
          <svg class="h-2 w-[5px]" viewBox="0 0 5 8" fill="none" stroke="#b8b8b8" stroke-width="1.500"><path d="M.5.5 4 4 .5 7.500"/></svg>
        </div>
      </div>
    </section>
  </aside>
</div>
<div class="h-[2px] shrink-0 bg-[#d8d8d8] pl-[186px]"><div class="h-full w-9 bg-white"></div></div>
</body>
</html>
